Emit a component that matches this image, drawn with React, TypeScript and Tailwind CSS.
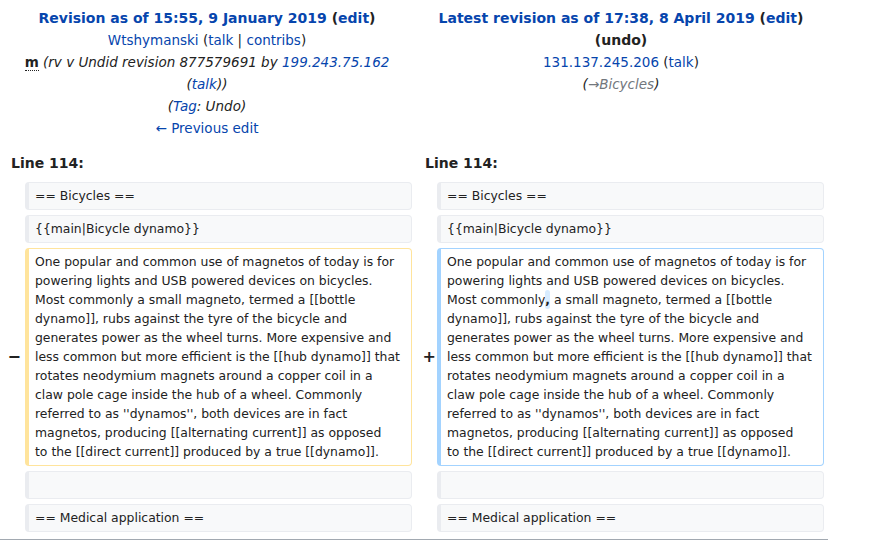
import React from 'react';

const font = { fontFamily: '"DejaVu Sans", sans-serif' };

// wrapped as in the original diff view
const lines = [
  'One popular and common use of magnetos of today is for',
  'powering lights and USB powered devices on bicycles.',
  'Most commonly a small magneto, termed a [[bottle',
  'dynamo]], rubs against the tyre of the bicycle and',
  'generates power as the wheel turns. More expensive and',
  'less common but more efficient is the [[hub dynamo]] that',
  'rotates neodymium magnets around a copper coil in a',
  'claw pole cage inside the hub of a wheel. Commonly',
  "referred to as ''dynamos'', both devices are in fact",
  'magnetos, producing [[alternating current]] as opposed',
  'to the [[direct current]] produced by a true [[dynamo]].',
];

const Context: React.FC<{ text: string }> = ({ text }) => (
  <div className="min-h-[28px] rounded-[4px] border border-l-4 border-[#eaecf0] bg-[#f8f9fa] pl-[6px] pr-2 pt-[3px] pb-[4px] text-[12.4px] leading-[19px] whitespace-pre-wrap">
    {text}
  </div>
);

const Changed: React.FC<{ border: string; added?: boolean }> = ({ border, added }) => (
  <div className={`rounded-[4px] border border-l-4 bg-white pl-[6px] pr-[4px] pt-[3px] pb-[4px] text-[12.4px] leading-[19px] ${border}`}>
    {lines.map((l, i) => (
      <div key={i} className="whitespace-nowrap">
        {added && i === 2 ? (
          <>
            Most commonly
            <ins className="rounded-[4px] bg-[#d8ecff] py-[2px] font-bold no-underline">,</ins> a small magneto, termed a [[bottle
          </>
        ) : (
          l
        )}
      </div>
    ))}
  </div>
);

const App: React.FC = () => {
  return (
    <div className="h-[556px] w-[874px] bg-white text-[13.5px] text-[#222]" style={font}>
      <div className="w-[828px]">
        {/* revision headers */}
        <div className="grid grid-cols-2 pt-[7px] text-center leading-[22px]">
          <div className="px-[6px]">
            <div className="text-[14px] font-bold">
              <a className="text-[#0645ad]">Revision as of 15:55, 9 January 2019</a> (<a className="text-[#0645ad]">edit</a>)
            </div>
            <div>
              <a className="text-[#0645ad]">Wtshymanski</a> (<a className="text-[#0645ad]">talk</a> | <a className="text-[#0645ad]">contribs</a>)
            </div>
            <div>
              <abbr className="font-bold no-underline border-b border-dotted border-[#222]">m</abbr>{' '}
              <span className="italic">
                (rv v Undid revision 877579691 by <a className="text-[#0645ad]">199.243.75.162</a> (<a className="text-[#0645ad]">talk</a>))
              </span>
            </div>
            <div className="italic">
              (<a className="text-[#0645ad]">Tag</a>: Undo)
            </div>
            <div>
              <a className="text-[#0645ad]">← Previous edit</a>
            </div>
          </div>
          <div className="px-[6px]">
            <div className="text-[14px] font-bold">
              <a className="text-[#0645ad]">Latest revision as of 17:38, 8 April 2019</a> (<a className="text-[#0645ad]">edit</a>)
            </div>
            <div className="text-[14px] font-bold">(undo)</div>
            <div>
              <a className="text-[#0645ad]">131.137.245.206</a> (<a className="text-[#0645ad]">talk</a>)
            </div>
            <div className="italic">
              (<span className="text-[#72777d]">→Bicycles</span>)
            </div>
          </div>
        </div>

        {/* line numbers */}
        <div className="mt-[13px] grid grid-cols-2 text-[14px] leading-[22px] font-bold">
          <div className="pl-[11px]">Line 114:</div>
          <div className="pl-[11px]">Line 114:</div>
        </div>

        {/* diff rows */}
        <div className="mt-[8px] grid grid-cols-[25px_387px_25px_387px] gap-y-[5px]">
          <div />
          <Context text="== Bicycles ==" />
          <div />
          <Context text="== Bicycles ==" />

          <div />
          <Context text="{{main|Bicycle dynamo}}" />
          <div />
          <Context text="{{main|Bicycle dynamo}}" />

          <div className="flex items-center justify-end pr-[4px] text-[16px] font-bold">−</div>
          <Changed border="border-[#ffe49c]" />
          <div className="flex items-center justify-end pr-[1px] text-[16px] font-bold">+</div>
          <Changed border="border-[#a3d3ff]" added />

          <div />
          <Context text="" />
          <div />
          <Context text="" />

          <div />
          <Context text="== Medical application ==" />
          <div />
          <Context text="== Medical application ==" />
        </div>

        <div className="mt-[7px] h-px bg-[#a2a9b1]" />
      </div>
    </div>
  );
};

export default App;
